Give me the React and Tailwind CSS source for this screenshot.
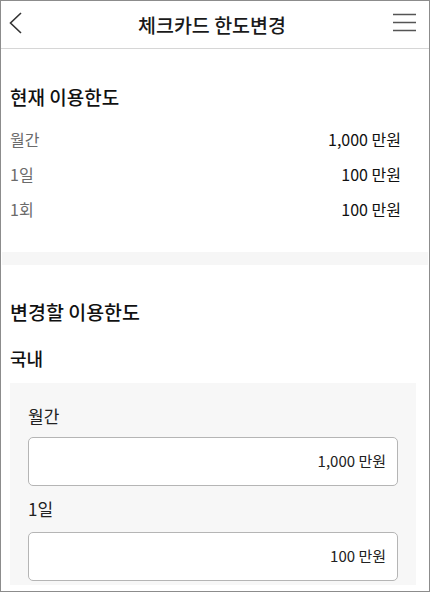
import React from "react";

const font = { fontFamily: '"Noto Sans CJK KR", "Noto Sans", sans-serif' };

function Row({ label, value }) {
  return (
    <div className="flex h-[35px] items-center justify-between pr-[28px]">
      <span className="text-[16px] text-[#6b6b6b]">{label}</span>
      <span className="text-[16px] text-[#111]">{value}</span>
    </div>
  );
}

function Field({ label, value, first }) {
  return (
    <div className={first ? "" : "mt-[11px]"}>
      <div className="h-[24px] text-[17px] leading-[24px] text-[#222]">{label}</div>
      <div className={`${first ? "mt-[9px]" : "mt-[11px]"} flex h-[49px] items-center justify-end rounded-[5px] border border-[#b5b5b5] bg-white pr-[11px] text-[15px] text-[#222]`}>
        {value}
      </div>
    </div>
  );
}

export default function App() {
  return (
    <div
      style={font}
      className="h-[592px] w-[430px] overflow-hidden border border-[#8c8c8c] bg-white"
    >
      <header className="relative flex h-[48px] items-center justify-center border-b border-[#d6d6d6] pr-[6px]">
        <svg className="absolute left-[7px] top-[10px]" width="16" height="24" viewBox="0 0 16 24">
          <path d="M13 2 L2.5 12 L13 22" fill="none" stroke="#333" strokeWidth="1.6" />
        </svg>
        <h1 className="text-[19.5px] font-medium leading-[28px] text-[#1a1a1a]">체크카드 한도변경</h1>
        <svg className="absolute right-[12px] top-[12px]" width="24" height="20" viewBox="0 0 24 20">
          <path d="M0 1.5 H23 M0 9.5 H23 M0 17.5 H23" stroke="#555" strokeWidth="1.4" />
        </svg>
      </header>

      <section className="pl-[9px] pt-[34px] pb-[26px]">
        <h2 className="h-[28px] text-[19px] font-medium leading-[28px] text-[#111]">현재 이용한도</h2>
        <div className="mt-[10px]">
          <Row label="월간" value="1,000 만원" />
          <Row label="1일" value="100 만원" />
          <Row label="1회" value="100 만원" />
        </div>
      </section>

      <div className="mx-[1px] h-[13px] bg-[#f6f6f6]" />

      <section className="pl-[9px] pr-[13px] pt-[33px]">
        <h2 className="h-[28px] text-[19.5px] font-medium leading-[28px] text-[#111]">변경할 이용한도</h2>
        <div className="mt-[19px] h-[26px] text-[18px] font-medium leading-[26px] text-[#111]">국내</div>
        <div className="mt-[12px] bg-[#f7f7f7] px-[18px] pt-[21px] pb-[4px]">
          <Field label="월간" value="1,000 만원" first />
          <Field label="1일" value="100 만원" />
        </div>
      </section>
    </div>
  );
}
